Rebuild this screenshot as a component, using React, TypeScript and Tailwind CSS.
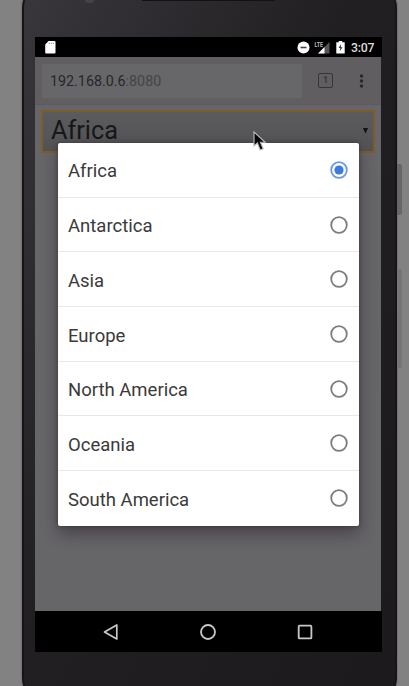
import React from "react";

const regions = ["Africa", "Antarctica", "Asia", "Europe", "North America", "Oceania", "South America"];

function Radio({ checked }: { checked: boolean }) {
  return (
    <svg className="h-5 w-5 shrink-0" viewBox="0 0 20 20" fill="none">
      <circle cx="10" cy="10" r="7.8" stroke={checked ? "#6a97e4" : "#7c7c7c"} strokeWidth="1.8" />
      {checked && <circle cx="10" cy="10" r="4.6" fill="#3d79df" />}
    </svg>
  );
}

function StatusBar() {
  return (
    <div className="flex h-5 items-center justify-between bg-black pl-[10px] pr-[7px]">
      <svg className="h-[13px] w-[11px]" viewBox="0 0 11 13">
        <path d="M3.5 0H9.5Q10.5 0 10.5 1V11.5Q10.5 12.5 9.5 12.5H1.2Q.2 12.5 .2 11.5V3.5Z" fill="#fff" />
        <path d="M4.3 1.7V3M6.3 1.7V3M8.3 1.7V3" stroke="#777" strokeWidth=".8" />
      </svg>
      <div className="flex items-center">
        <svg className="mr-[4px] h-[13px] w-[13px]" viewBox="0 0 13 13">
          <circle cx="6.5" cy="6.5" r="6" fill="#fff" />
          <path d="M3.5 6.5H9.5" stroke="#444" strokeWidth="1.6" />
        </svg>
        <svg className="mr-[6px] h-[13px] w-4" viewBox="0 0 16 13">
          <path d="M15.5 1V12.5H4Z" fill="#555" />
          <path d="M10.5 6V12.5H4Z" fill="#fff" />
          <text x="0.5" y="5.8" fontSize="6.5" fontFamily="Roboto, sans-serif" fontWeight="700" fill="#bbb" textLength="8.5" lengthAdjust="spacingAndGlyphs">LTE</text>
        </svg>
        <svg className="mr-[6px] h-[13px] w-[9px]" viewBox="0 0 9 13">
          <path d="M2.8 0H6.2V1.2H8.7V12.5H.3V1.2H2.8Z" fill="#fff" />
          <path d="M5.1 3L2.6 7H4.3L3.8 10.2L6.5 6.2H4.8Z" fill="#333" />
        </svg>
        <span className="w-6 pt-px text-[12.3px] font-medium leading-5 tracking-[-0.2px] text-[#ddd]">3:07</span>
      </div>
    </div>
  );
}

export default function App() {
  return (
    <div className="relative h-[686px] w-[409px] overflow-hidden bg-[#828282] font-['Roboto',sans-serif]">
      <div className="flex justify-end pl-[22px]">
        <main className="-mt-5 h-[726px] w-[375px] shrink-0 rounded-[28px] border-x-2 border-[#151417] bg-linear-to-br from-[#39373b] via-[#211f22] via-45% to-[#1c1a1d] pl-[11px] pr-[13px] pt-5 shadow-[0_0_2px_#55505a]">
          <div className="flex h-[37px] items-start">
            <div className="-mt-1 ml-[50px] h-[7px] w-[9px] rounded-full bg-[#464348]" />
            <div className="ml-[48px] h-px w-[133px] bg-[#121113]" />
          </div>
          <div className="w-[347px]">
            <StatusBar />
            <div className="mr-px h-[554px] bg-[#666568]">
              <header className="flex h-12 items-center border-b border-[#5c5a5e] bg-[#605e61] pl-[7px]">
                <div className="flex h-[34px] w-[260px] items-center rounded-[2px] bg-[#676669] pl-2 pt-[3px] text-[14.3px] text-[#28262a]">
                  <span>192.168.0.6</span><span className="text-[#464448]">:8080</span>
                </div>
                <div className="ml-4 flex h-[15px] w-[15px] items-center justify-center rounded-[2px] border-[1.5px] border-[#363438] text-[9px] font-medium leading-none text-[#302e32]">1</div>
                <svg className="ml-[26px] h-4 w-[5px]" viewBox="0 0 5 16" fill="#29272b">
                  <circle cx="2.5" cy="3" r="1.7" /><circle cx="2.5" cy="8" r="1.7" /><circle cx="2.5" cy="13" r="1.7" />
                </svg>
              </header>
              <div className="ml-[6px] mt-[5px] flex h-[43px] w-[334px] items-center justify-between border-2 border-[#7d5c2c] bg-linear-to-b from-[#5b5a5d] to-[#535255] pl-2 pr-[5px]">
                <span className="-mt-px text-[25.3px] leading-none text-[#171619]">Africa</span>
                <svg className="-mt-0.5 h-[6px] w-[5px]" viewBox="0 0 5 6"><path d="M0 0H5L2.5 5.5Z" fill="#111" /></svg>
              </div>
            </div>
            <nav className="flex h-[41px] items-center justify-between bg-black pl-[67px] pr-[69px]">
              <svg className="h-[18px] w-[17px]" viewBox="0 0 17 18" fill="none"><path d="M14.8 2V16L2.5 9Z" stroke="#c8c8c8" strokeWidth="1.7" strokeLinejoin="round" /></svg>
              <svg className="h-[18px] w-[18px]" viewBox="0 0 18 18" fill="none"><circle cx="9" cy="9" r="7" stroke="#c8c8c8" strokeWidth="1.8" /></svg>
              <svg className="h-4 w-4" viewBox="0 0 16 16" fill="none"><rect x="1.7" y="1.7" width="12.7" height="12.7" rx="1" stroke="#c8c8c8" strokeWidth="1.8" /></svg>
            </nav>
          </div>
        </main>
        <div className="flex w-3 flex-col pt-[164px]">
          <div className="h-[51px] w-[5px] rounded-r-[2px] bg-[#69666b]" />
          <div className="mt-[54px] h-[99px] w-[5px] rounded-r-[2px] bg-[#777478]" />
        </div>
      </div>

      <ul className="absolute left-[57.5px] top-[143px] w-[301px] rounded-[2px] bg-white shadow-[0_8px_16px_rgba(35,25,35,0.45),0_0_4px_rgba(20,20,20,0.4)]">
        {regions.map((region, index) => (
          <li key={region} className="flex h-[54.7px] items-center justify-between border-b border-[#e8e8e8] pl-[10.5px] pr-[9.5px] text-[18.5px] text-[#3a3a3a] last:border-b-0">
            <span className="pt-[5px]">{region}</span>
            <Radio checked={index === 0} />
          </li>
        ))}
      </ul>
      <svg className="absolute left-[253px] top-[131px] h-[21px] w-[14px]" viewBox="0 0 14 21">
        <path d="M1 1V15L4.4 12L7.2 19L10.2 17.8L7.4 11.3H12.2Z" fill="#080808" stroke="#bbb" strokeWidth="1.1" />
      </svg>
    </div>
  );
}
